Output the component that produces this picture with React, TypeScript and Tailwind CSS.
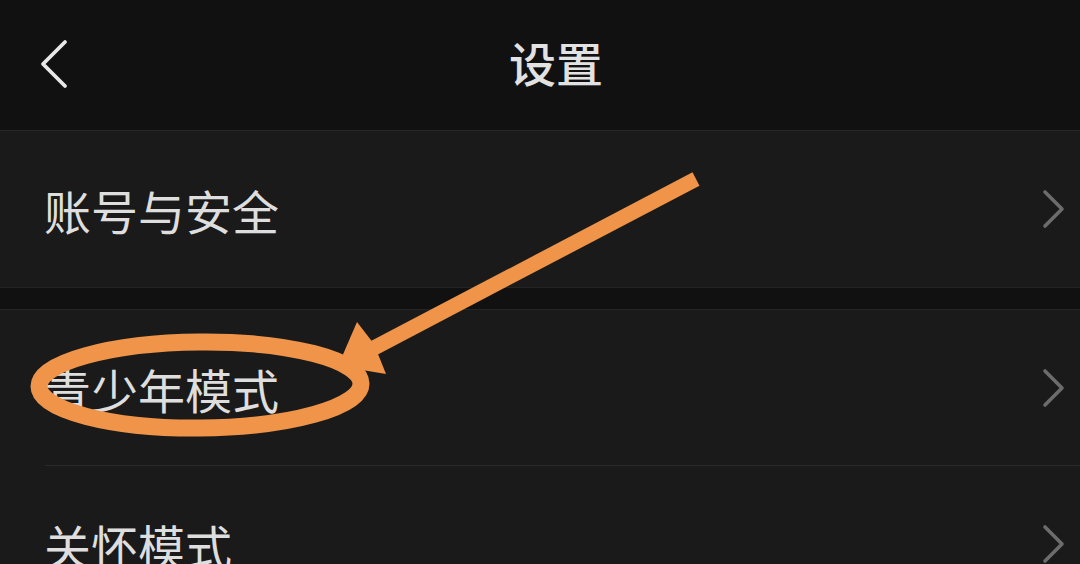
const rows = ['账号与安全', '青少年模式', '关怀模式'];

function Chevron() {
    return (
        <svg width="24" height="40" viewBox="0 0 24 40" className="text-[#6c6c6c]">
            <polyline
                points="4,3 21,20 4,37"
                fill="none"
                stroke="currentColor"
                strokeWidth="3.6"
                strokeLinecap="round"
                strokeLinejoin="round"
            />
        </svg>
    );
}

function Row({ label, divider }: { label: string; divider?: boolean }) {
    return (
        <div className="relative h-[156px] flex items-center justify-between pl-[44px] pr-[15px] bg-[#1a1a1a]">
            <span className="text-[47px] leading-none text-[#dedede]">{label}</span>
            <Chevron />
            {divider && <div className="absolute left-[45px] right-0 bottom-0 h-px bg-[#2a2a2a]" />}
        </div>
    );
}

export default function App() {
    return (
        <div
            className="relative w-[1080px] h-[564px] overflow-hidden bg-[#111111]"
            style={{ fontFamily: '"Noto Sans CJK SC", "Noto Sans", sans-serif' }}
        >
            <header className="relative h-[131px] flex items-center justify-center border-b border-[#262626]">
                <svg className="absolute left-[38px] top-[38px] text-[#e8e8e8]" width="32" height="52" viewBox="0 0 32 52">
                    <polyline
                        points="27,4 5,26 27,48"
                        fill="none"
                        stroke="currentColor"
                        strokeWidth="3.8"
                        strokeLinecap="round"
                        strokeLinejoin="round"
                    />
                </svg>
                <h1 className="text-[47px] font-medium leading-none text-[#e2e2e2] ml-[32px] -mt-[8px]">设置</h1>
            </header>

            <Row label={rows[0]} />
            <div className="h-[23px] bg-[#111111] border-y border-[#242424]" />
            <Row label={rows[1]} divider />
            <Row label={rows[2]} />

            {/* annotation drawn over the screenshot */}
            <svg className="absolute inset-0 pointer-events-none" width="1080" height="564" viewBox="0 0 1080 564">
                <ellipse
                    cx="200"
                    cy="385"
                    rx="161"
                    ry="43"
                    fill="none"
                    stroke="#ef9448"
                    strokeWidth="17"
                    transform="rotate(-0.5 200 385)"
                />
                <line x1="696" y1="179" x2="372" y2="349" stroke="#ef9448" strokeWidth="15" />
                <polygon points="338,366 357,322 374,344 386,374" fill="#ef9448" />
            </svg>
        </div>
    );
}
